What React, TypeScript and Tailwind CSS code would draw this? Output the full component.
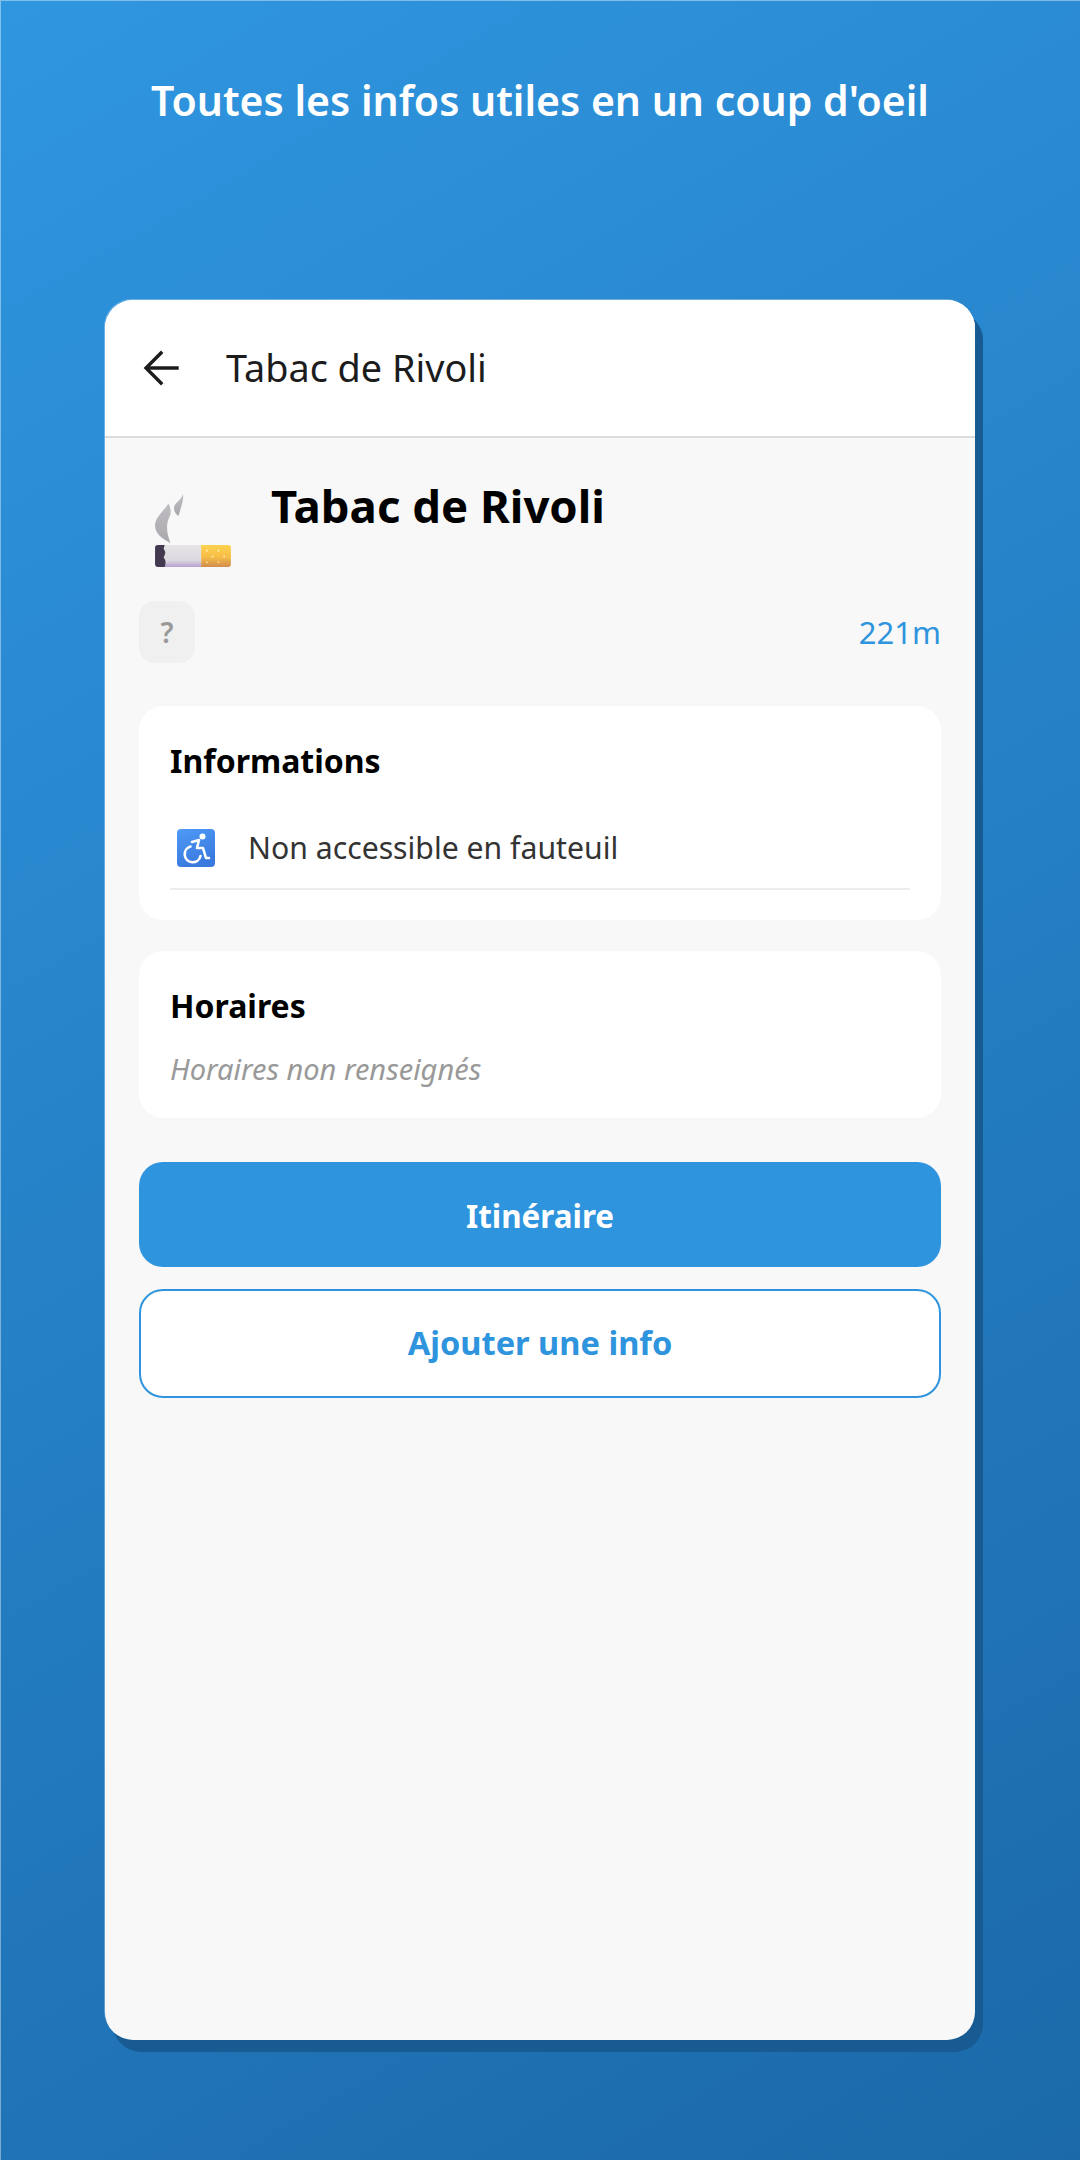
import React from "react";

const font = { fontFamily: '"Noto Sans", "Open Sans", sans-serif' };

function Cigarette() {
  return (
    <svg viewBox="0 0 80 76" className="mt-[16px] h-[73px] w-[77px] shrink-0" aria-hidden="true">
      <defs>
        <linearGradient id="paper" x1="0" y1="0" x2="0" y2="1">
          <stop offset="0" stopColor="#e6e4e6" />
          <stop offset="0.7" stopColor="#dcd8e0" />
          <stop offset="1" stopColor="#b79fce" />
        </linearGradient>
        <linearGradient id="filter" x1="0" y1="0" x2="0" y2="1">
          <stop offset="0" stopColor="#ffd24f" />
          <stop offset="0.55" stopColor="#f6bd47" />
          <stop offset="1" stopColor="#d08c4e" />
        </linearGradient>
        <linearGradient id="smoke" x1="0" y1="0" x2="0" y2="1">
          <stop offset="0" stopColor="#c0bec2" />
          <stop offset="1" stopColor="#a9a7ac" />
        </linearGradient>
      </defs>
      <path d="M15 10 C18 16 18 20 16 24 C13 30 12 38 17 51 C10 47 1 42 1 33 C1 24 10 18 15 10Z" fill="url(#smoke)" />
      <path d="M30 0 C31 6 29 10 28 14 C27 17 27 20 25 23 C22 20 20 17 21 13 C22 9 28 7 30 0Z" fill="url(#smoke)" />
      <path d="M4 53 H12 V76 H4 Q1 76 1 73 V56 Q1 53 4 53Z" fill="#433a52" />
      <path d="M11 53 H49 V76 H11 L13 71 L10 66 L12 61 L10 57Z" fill="url(#paper)" />
      <path d="M49 53 H77 Q80 53 80 56 V73 Q80 76 77 76 H49Z" fill="url(#filter)" />
      <g fill="#ffe9a8">
        <circle cx="55" cy="59" r="1.1" />
        <circle cx="67" cy="59" r="1.1" />
        <circle cx="61" cy="65" r="1.1" />
        <circle cx="73" cy="65" r="1.1" />
        <circle cx="55" cy="71" r="1.1" opacity="0.7" />
        <circle cx="67" cy="71" r="1.1" opacity="0.7" />
      </g>
    </svg>
  );
}

function Wheelchair() {
  return (
    <svg viewBox="0 0 40 40" className="h-[40px] w-[40px] shrink-0" aria-hidden="true">
      <defs>
        <linearGradient id="wc" x1="0" y1="0" x2="0.4" y2="1">
          <stop offset="0" stopColor="#4f9bf7" />
          <stop offset="1" stopColor="#3a79de" />
        </linearGradient>
      </defs>
      <rect x="1" y="1" width="38" height="38" rx="4" fill="url(#wc)" />
      <circle cx="26.5" cy="8.5" r="3" fill="#fff" />
      <g fill="none" stroke="#fff" strokeWidth="2.6" strokeLinecap="round" strokeLinejoin="round">
        <path d="M16 14 L23 12 L21 20 H27 L30 30 H33" />
        <path d="M14.5 18.5 A8 8 0 1 0 24.5 28" />
      </g>
    </svg>
  );
}

export default function App() {
  return (
    <div
      className="flex h-[2160px] w-[1080px] flex-col items-center overflow-hidden bg-[linear-gradient(150deg,#2f96e0,#1b69a9)] pt-[75px] shadow-[inset_1px_1px_0_0_rgba(255,255,255,0.4)]"
      style={font}
    >
      <h1 className="h-[50px] text-[41px] leading-[50px] font-semibold whitespace-nowrap text-white">
        Toutes les infos utiles en un coup d'oeil
      </h1>
      <div className="mt-[175px] flex h-[1740px] w-[870px] flex-col overflow-hidden rounded-[28px] bg-[#f8f8f8] shadow-[8px_12px_0_0_#185a92,-1px_-1px_0_0_rgba(255,255,255,0.3)]">
        <header className="flex h-[138px] shrink-0 items-center border-b-2 border-[#dcdcdc] bg-white pl-[38px]">
          <svg viewBox="0 0 36 36" className="h-[36px] w-[36px]" fill="none" stroke="#1c1c1c" strokeWidth="3.4" strokeLinecap="square" strokeLinejoin="miter" aria-hidden="true">
            <path d="M5 18 H34" />
            <path d="M18 3 L3 18 L18 33" />
          </svg>
          <span className="ml-[47px] text-[37.8px] leading-[48px] text-[#1c1c1c]">Tabac de Rivoli</span>
        </header>
        <main className="flex flex-col px-[34px]">
          <div className="flex items-start pt-[40px] pl-[15px]">
            <Cigarette />
            <span className="ml-[40px] text-[45.5px] leading-[55px] font-bold text-black">Tabac de Rivoli</span>
          </div>
          <div className="mt-[34px] flex items-center justify-between">
            <div className="flex h-[62px] w-[56px] items-center justify-center rounded-[16px] bg-[#f0f0f0] text-[28px] font-semibold text-[#999999]">?</div>
            <span className="text-[31px] leading-[44px] text-[#2e94dd]">221m</span>
          </div>
          <section className="mt-[43px] h-[214px] rounded-[24px] bg-white px-[31px] pt-[35px]">
            <h2 className="text-[32px] leading-[40px] font-bold text-black">Informations</h2>
            <div className="mt-[26px] flex h-[83px] items-center border-b-2 border-[#ececec] pl-[6px]">
              <Wheelchair />
              <span className="ml-[32px] text-[30.2px] leading-[38px] text-[#333333]">Non accessible en fauteuil</span>
            </div>
          </section>
          <section className="mt-[31px] h-[167px] rounded-[24px] bg-white px-[31px] pt-[35px]">
            <h2 className="text-[32px] leading-[40px] font-bold text-black">Horaires</h2>
            <p className="mt-[23px] text-[29px] leading-[40px] text-[#999999] italic">Horaires non renseignés</p>
          </section>
          <button className="mt-[44px] flex h-[105px] items-center justify-center rounded-[24px] bg-[#2e94dd] text-[31.4px] font-bold text-white">
            <span className="translate-y-[1px]">Itinéraire</span>
          </button>
          <button className="mt-[22px] flex h-[109px] items-center justify-center rounded-[24px] border-2 border-[#2e94dd] bg-white text-[32.6px] font-bold text-[#2e94dd]">
            Ajouter une info
          </button>
        </main>
      </div>
    </div>
  );
}
